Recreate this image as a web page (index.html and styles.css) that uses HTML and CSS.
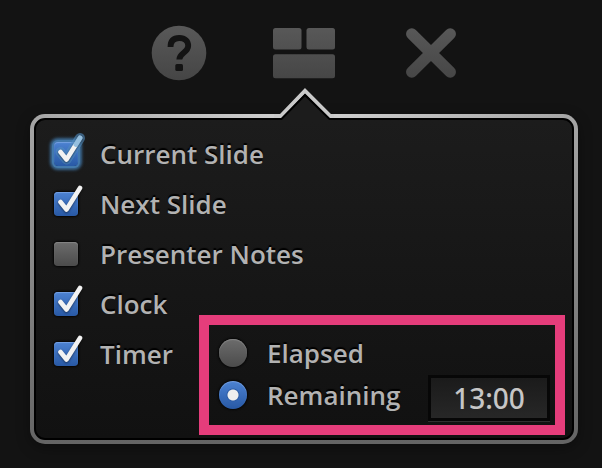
FILE: index.html
```html
<!DOCTYPE html>
<html lang="en">
<head>
<meta charset="utf-8">
<title>Presenter Display</title>
<link rel="stylesheet" href="styles.css">
</head>
<body>
<nav class="toolbar">
  <button class="tool" type="button" aria-label="Help">
    <svg width="56" height="56" viewBox="0 0 56 56">
      <defs><linearGradient id="metal" gradientUnits="userSpaceOnUse" x1="0" y1="0" x2="0" y2="56"><stop offset="0" stop-color="#595959"/><stop offset="1" stop-color="#454545"/></linearGradient></defs>
      <circle cx="28" cy="28" r="27.3" fill="url(#metal)"/>
      <path d="M19.500 22C19.500 16 22.500 13 28.300 13C34 13 37.200 16.200 37.200 21C37.200 27.500 28.300 28 28.300 34.500" fill="none" stroke="#131313" stroke-width="5.800"/>
      <rect x="24.300" y="39" width="7.700" height="7" rx="1.500" fill="#131313"/>
    </svg>
  </button>
  <button class="tool" type="button" aria-label="Layout">
    <svg width="62" height="56" viewBox="0 0 62 56" fill="url(#metal)">
      <rect x="0" y="3" width="28.500" height="21.500" rx="2.500"/>
      <rect x="33.500" y="3" width="28.500" height="21.500" rx="2.500"/>
      <rect x="0" y="29.200" width="62" height="24" rx="2.500"/>
    </svg>
  </button>
  <button class="tool" type="button" aria-label="Close">
    <svg width="56" height="56" viewBox="0 0 56 56">
      <path d="M10.800 9L49.200 47M49.200 9L10.800 47" fill="none" stroke="url(#metal)" stroke-width="11.500" stroke-linecap="round"/>
    </svg>
  </button>
</nav>

<main class="frame">
  <svg class="pointer" width="60" height="36" viewBox="0 0 60 36">
    <path d="M3 34L6.500 28L31 3L56.500 28L60 34Z" fill="#1c1c1c"/>
    <path d="M0 30H7L31 4.800L56 30H60" fill="none" stroke="#c9c9c9" stroke-width="4"/>
    <path d="M0 33H7.500L31 9L55.500 33H60V36H0Z" fill="#1c1c1c"/>
    <path d="M0 33H7.500L31 9L55.500 33H60" fill="none" stroke="#000" stroke-width="2"/>
  </svg>
  <form class="panel">
    <label class="option"><span class="tick"><input class="box focused" type="checkbox" checked><svg class="mark" width="36" height="36" viewBox="0 0 36 36"><path class="halo" d="M10.500 18L16.500 25.500L30 4"/><path class="stroke" d="M10.500 18L16.500 25.500L30 4"/><path class="glow" d="M26 10.400L30 4"/></svg></span>Current Slide</label>
    <label class="option"><span class="tick"><input class="box" type="checkbox" checked><svg class="mark" width="36" height="36" viewBox="0 0 36 36"><path class="stroke" d="M10.500 18L16.500 25.500L30 4"/></svg></span>Next Slide</label>
    <label class="option"><span class="tick"><input class="box" type="checkbox"></span>Presenter Notes</label>
    <label class="option"><span class="tick"><input class="box" type="checkbox" checked><svg class="mark" width="36" height="36" viewBox="0 0 36 36"><path class="stroke" d="M10.500 18L16.500 25.500L30 4"/></svg></span>Clock</label>
    <div class="timer">
      <label class="option"><span class="tick"><input class="box" type="checkbox" checked><svg class="mark" width="36" height="36" viewBox="0 0 36 36"><path class="stroke" d="M10.500 18L16.500 25.500L30 4"/></svg></span>Timer</label>
      <div class="mode" role="radiogroup" aria-label="Timer mode">
        <label class="choice"><input class="radio" type="radio" name="mode">Elapsed</label>
        <div class="remaining">
          <label class="choice"><input class="radio" type="radio" name="mode" checked>Remaining</label>
          <input class="time" type="text" value="13:00" aria-label="Remaining time">
        </div>
      </div>
    </div>
  </form>
</main>
</body>
</html>
```
FILE: styles.css
```css
* { box-sizing: border-box; }

body {
  margin: 0;
  padding: 25px 24px 24px 30px;
  background: #131313;
  color: #b2b2b2;
  font: 600 26px/28px "Open Sans", "Lucida Grande", sans-serif;
}

.toolbar {
  display: flex;
  justify-content: center;
  gap: 66px;
}

.tool {
  display: block;
  padding: 0;
  border: 0;
  background: none;
}

.tool svg { display: block; }

.frame {
  position: relative;
  margin-top: 33px;
  padding: 4px;
  border-radius: 15px;
  background:
    radial-gradient(ellipse 270px 60px at 50% 0, rgba(215, 215, 215, 0.9), rgba(200, 200, 200, 0)),
    linear-gradient(#a6a6a6, #646464);
  box-shadow: 0 4px 14px rgba(0, 0, 0, 0.35);
}

.pointer {
  position: absolute;
  top: -28px;
  left: calc(50% - 30px);
}

.panel {
  padding: 23px 7px 3px 18px;
  border: 2px solid #000;
  border-radius: 11px;
  background: linear-gradient(#1c1c1c, #111);
  text-shadow: 0 -2px 1px #000;
}

.option {
  display: flex;
  align-items: center;
  gap: 22px;
  height: 22px;
}

.option + .option { margin-top: 28px; }

.tick {
  position: relative;
  flex: none;
  width: 24px;
  height: 24px;
}

.box,
.radio {
  appearance: none;
  display: block;
  flex: none;
  margin: 0;
  background: linear-gradient(#6c6c6c, #4b4b4b);
  box-shadow: 0 0 2px 1px #050505, inset 0 1px 1px #858585;
}

.box {
  width: 24px;
  height: 24px;
  border-radius: 4px;
}

.box:checked,
.radio:checked {
  background: linear-gradient(#4c82d2, #2859a5);
  box-shadow: 0 0 2px 1px #050505, inset 0 1px 1px #76a0e2;
}

.box.focused:checked {
  box-shadow: 0 0 0 2px #4379ac, 0 0 3px 4px rgba(65, 119, 168, 0.85), inset 0 1px 1px #76a0e2;
}

.mark {
  position: absolute;
  top: -8px;
  left: -4px;
  overflow: visible;
  pointer-events: none;
}

.mark path {
  fill: none;
  stroke-linecap: round;
  stroke-linejoin: round;
}

.mark .stroke {
  stroke: #f2f2f2;
  stroke-width: 4.6;
  filter: drop-shadow(0 1px 1px rgba(0, 0, 0, 0.5));
}

.mark .halo {
  stroke: rgba(82, 142, 194, 0.6);
  stroke-width: 10;
}

.mark .glow {
  stroke: rgba(110, 170, 215, 0.7);
  stroke-width: 5;
}

.timer {
  display: flex;
  align-items: flex-start;
}

.timer .option {
  width: 145px;
  margin-top: 28px;
}

.mode {
  flex: 1;
  padding: 7px 5px 4px 10px;
  border: 10px solid #e53d7b;
}

.choice {
  display: flex;
  align-items: center;
  gap: 20px;
  height: 42px;
}

.radio {
  width: 28px;
  height: 28px;
  border-radius: 50%;
}

.radio:checked {
  background:
    radial-gradient(circle, #eee 5px, #2d5da6 6px, transparent 7px),
    linear-gradient(#4c82d2, #2859a5);
}

.remaining {
  display: flex;
  justify-content: space-between;
  align-items: flex-start;
}

.time {
  width: 122px;
  height: 46px;
  margin-top: 1px;
  padding: 0;
  border: 3px solid #070707;
  border-radius: 0;
  outline: 0;
  background: linear-gradient(#1b1b1b, #272727);
  box-shadow: 0 1px 0 #303030;
  color: #c6c6c6;
  font: 500 28px/28px "Noto Sans", "Lucida Grande", sans-serif;
  text-align: center;
}
```
